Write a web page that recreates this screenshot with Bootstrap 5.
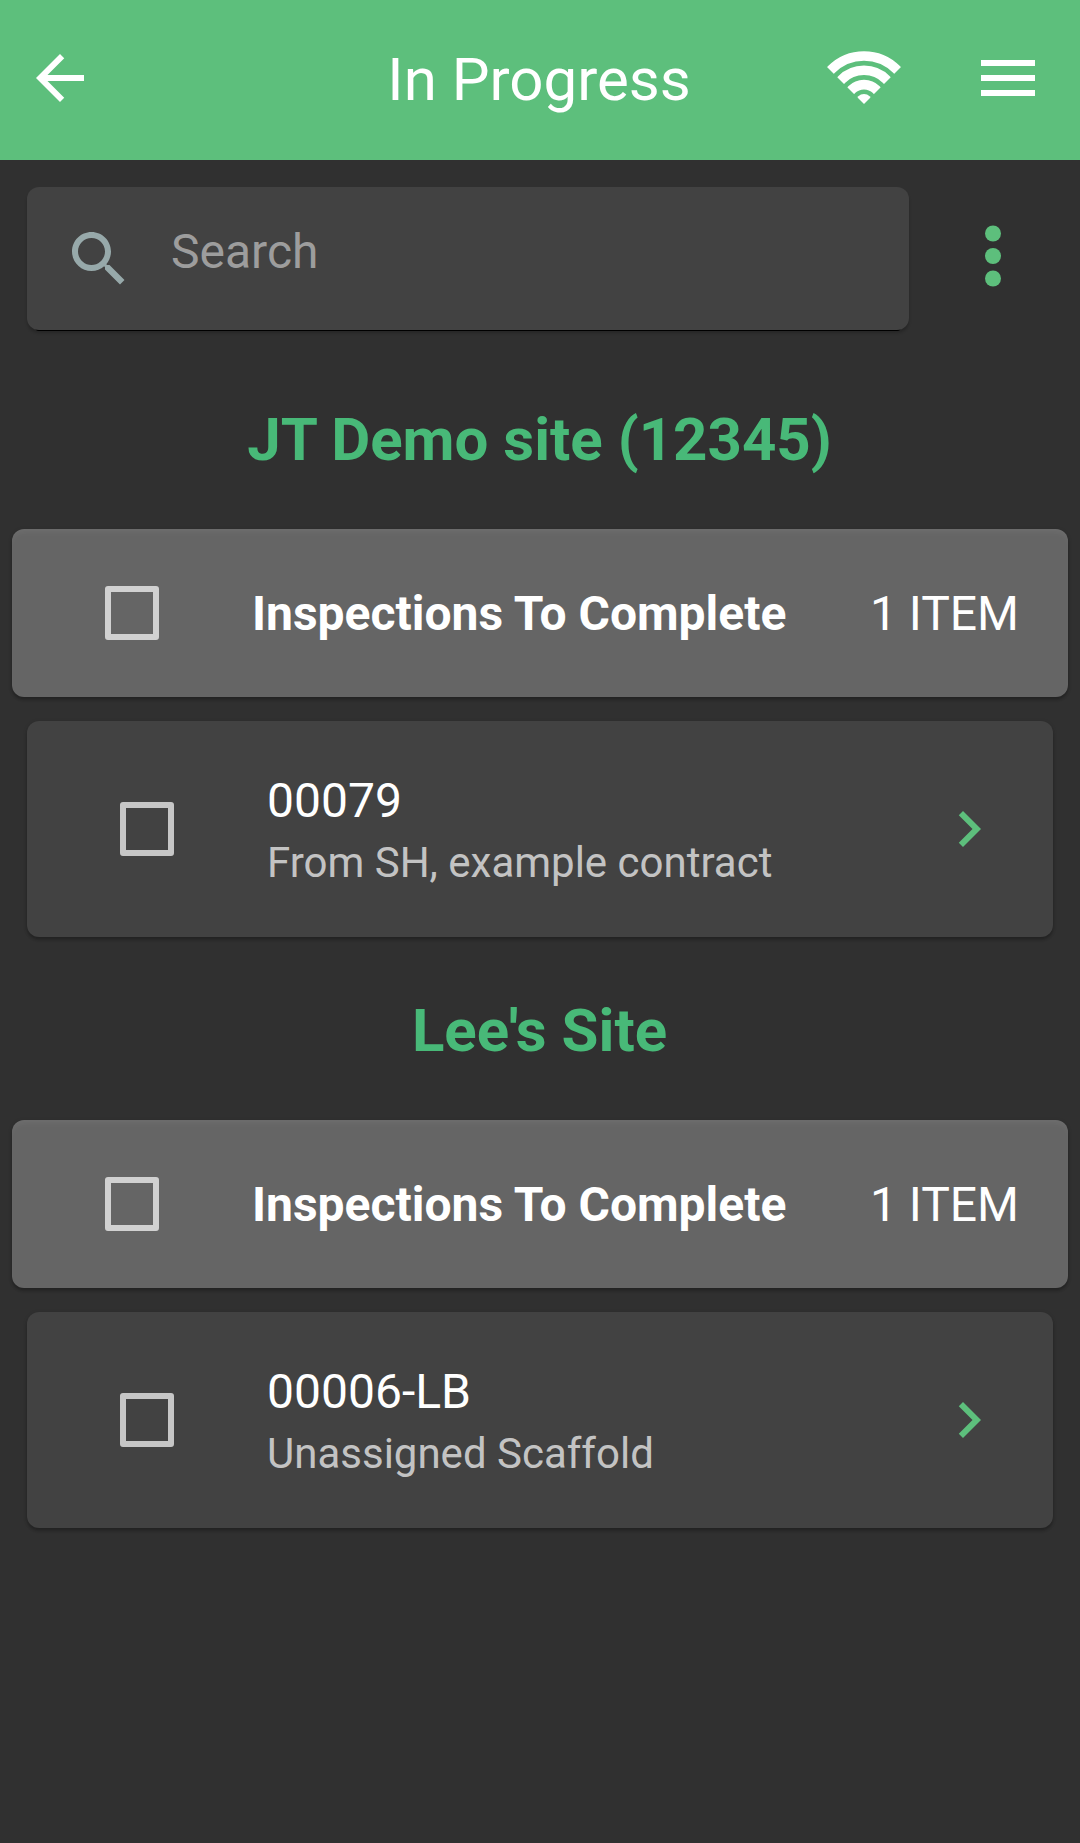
<!DOCTYPE html>
<html lang="en">
<head>
<meta charset="utf-8">
<meta name="viewport" content="width=device-width, initial-scale=1">
<title>In Progress</title>
<link href="https://cdn.jsdelivr.net/npm/bootstrap@5.3.0/dist/css/bootstrap.min.css" rel="stylesheet">
<style>
body{background:#303030;color:#fff;font-family:Roboto,"Liberation Sans",sans-serif;font-size:48px;line-height:72px;min-height:100vh}
svg{display:block;flex:none}
.icon{width:72px;height:72px;fill:currentColor}
.btn-plain{padding:0;border:0;line-height:1;color:inherit;border-radius:0}
.topbar{height:160px;background:#5dbf7c;padding:0 36px 4px 34px}
.topbar-side{flex:1 1 0}
.back{margin-left:-10px}
.topbar-title{font-size:60px;line-height:72px;font-weight:400;padding-top:4px}
.topbar-actions{gap:69px}
.wifi{margin-bottom:2px}
.toolbar{padding:27px 51px 0 27px}
.search-box{width:882px;height:143px;background:#424242;border-radius:12px;padding:0 36px;box-shadow:0 9px 0 -8px #000,0 3px 3px rgba(0,0,0,.2)}
.search-box .icon{color:#97a9aa}
.search-box input{font-size:48px;line-height:56px;padding:0 0 14px;margin-left:36px;height:68px;color:#fff}
.search-box input::placeholder{color:#9d9d9d;opacity:1}
.search-box input:focus{box-shadow:none}
.more{color:#5dbf7c;padding-bottom:6px}
.site-title{color:#48b978;font-size:60px;line-height:72px;font-weight:700;margin:0;padding-right:1px}
.site{padding-top:58px}
.site:first-of-type{padding-top:74px}
.group-row{margin:53px 12px 0;height:168px;border-radius:12px;background:#656565;padding:0 49px 0 93px;box-shadow:inset 0 6px 6px -3px rgba(255,255,255,.06),0 3px 3px rgba(0,0,0,.2),0 1px 4px rgba(0,0,0,.14)}
.group-row span{padding-top:2px}
.item-card{margin:24px 27px 0;height:216px;border-radius:12px;background:#424242;padding:0 48px 0 93px;box-shadow:0 3px 3px rgba(0,0,0,.2),0 1px 4px rgba(0,0,0,.14)}
.box.form-check-input{width:54px;height:54px;border:6px solid rgba(255,255,255,.7);border-radius:3px;background-color:transparent;margin:0 93px 0 0;flex:none}
.item-text{padding-top:6px}
.item-code{line-height:60px}
.item-note{font-size:42px;line-height:63px;color:rgba(255,255,255,.7)}
.chev{color:#5dbf7c}
</style>
<script src="https://cdn.jsdelivr.net/npm/bootstrap@5.3.0/dist/js/bootstrap.bundle.min.js"></script>
</head>
<body>
<header class="topbar d-flex align-items-center">
  <div class="topbar-side d-flex">
    <button class="btn btn-plain back" aria-label="Back"><svg class="icon" viewBox="0 0 24 24"><path d="M20 11H7.83l5.59-5.59L12 4l-8 8 8 8 1.41-1.41L7.83 13H20v-2z"/></svg></button>
  </div>
  <h1 class="topbar-title m-0">In Progress</h1>
  <div class="topbar-side topbar-actions d-flex justify-content-end align-items-center">
    <svg class="wifi" width="78" height="56" viewBox="-39 -54 78 56" aria-label="Online">
      <clipPath id="fan"><path d="M0 1 L-42 -41 V-56 H42 V-41Z"/></clipPath>
      <g clip-path="url(#fan)" fill="none" stroke="#fff" stroke-width="9.6"><circle cy="-1" r="46"/><circle cy="-1" r="31.7"/><circle cy="-1" r="17.4"/><circle cy="-1" r="8" fill="#fff" stroke="none"/></g>
    </svg>
    <button class="btn btn-plain" aria-label="Menu"><svg class="icon" viewBox="0 0 24 24"><path d="M3 18h18v-2H3v2zm0-5h18v-2H3v2zm0-7v2h18V6H3z"/></svg></button>
  </div>
</header>
<main>
  <div class="toolbar d-flex align-items-center justify-content-between">
    <div class="search-box d-flex align-items-center">
      <svg class="icon" viewBox="0 0 24 24"><path d="M15.5 14h-.79l-.28-.27C15.41 12.59 16 11.11 16 9.5 16 5.91 13.09 3 9.5 3S3 5.91 3 9.5 5.91 16 9.5 16c1.61 0 3.09-.59 4.23-1.57l.27.28v.79l5 4.99L20.49 19l-4.99-5zm-6 0C7.01 14 5 11.99 5 9.5S7.01 5 9.5 5 14 7.01 14 9.5 11.99 14 9.5 14z"/></svg>
      <input class="form-control bg-transparent border-0" type="text" placeholder="Search" aria-label="Search">
    </div>
    <button class="btn btn-plain more" aria-label="More"><svg width="72" height="72" viewBox="0 0 72 72" fill="currentColor"><circle cx="36" cy="13.5" r="8"/><circle cx="36" cy="36" r="8"/><circle cx="36" cy="58.5" r="8"/></svg></button>
  </div>
  <section class="site">
    <h2 class="site-title text-center">JT Demo site (12345)</h2>
    <div class="group-row d-flex align-items-center">
      <input class="form-check-input box" type="checkbox" aria-label="Select group">
      <span class="fw-bold flex-grow-1">Inspections To Complete</span>
      <span>1 ITEM</span>
    </div>
    <div class="item-card d-flex align-items-center">
      <input class="form-check-input box" type="checkbox" aria-label="Select 00079">
      <div class="item-text flex-grow-1"><div class="item-code">00079</div><div class="item-note">From SH, example contract</div></div>
      <svg class="icon chev" viewBox="0 0 24 24"><path d="M10 6L8.59 7.41 13.17 12l-4.58 4.59L10 18l6-6z"/></svg>
    </div>
  </section>
  <section class="site">
    <h2 class="site-title text-center">Lee's Site</h2>
    <div class="group-row d-flex align-items-center">
      <input class="form-check-input box" type="checkbox" aria-label="Select group">
      <span class="fw-bold flex-grow-1">Inspections To Complete</span>
      <span>1 ITEM</span>
    </div>
    <div class="item-card d-flex align-items-center">
      <input class="form-check-input box" type="checkbox" aria-label="Select 00006-LB">
      <div class="item-text flex-grow-1"><div class="item-code">00006-LB</div><div class="item-note">Unassigned Scaffold</div></div>
      <svg class="icon chev" viewBox="0 0 24 24"><path d="M10 6L8.59 7.41 13.17 12l-4.58 4.59L10 18l6-6z"/></svg>
    </div>
  </section>
</main>
</body>
</html>
